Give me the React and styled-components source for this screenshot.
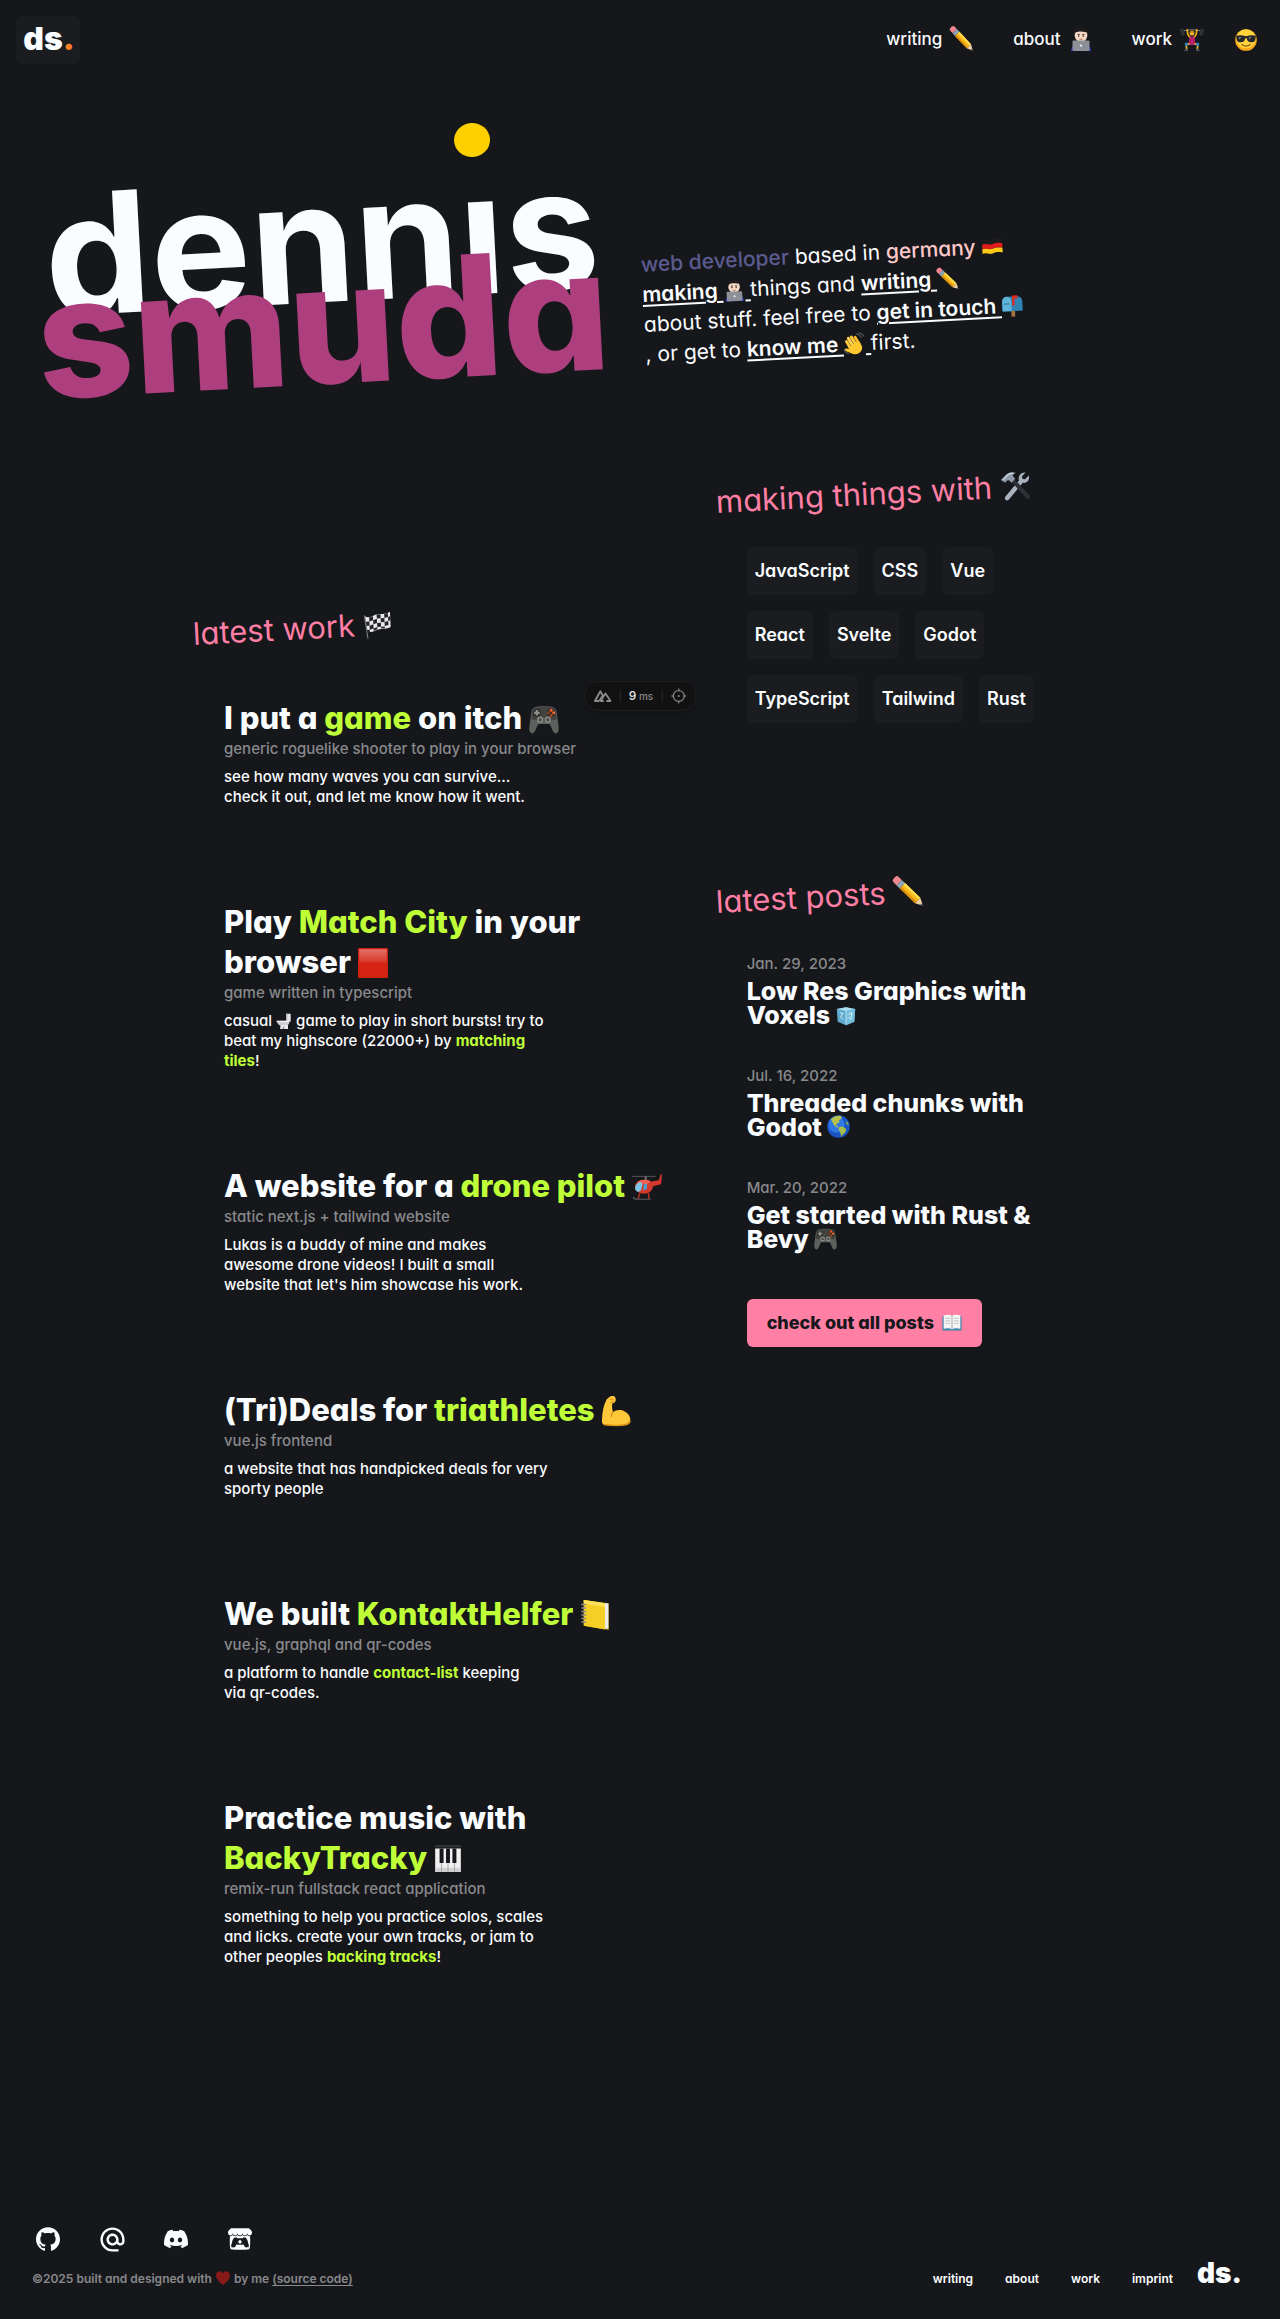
import React from 'react';
import styled, { createGlobalStyle } from 'styled-components';
import { SiGithub, SiDiscord, SiItchdotio } from 'react-icons/si';
import { MdAlternateEmail } from 'react-icons/md';

const color = {
  bg: '#16171b',
  panel: '#1b1c20',
  text: '#fafdff',
  muted: '#88898b',
  pink: '#ff7fa5',
  lime: '#bfff38',
  magenta: '#ad3f7f',
  yellow: '#ffd000',
  orange: '#ff7f24',
  indigo: '#5b5b90',
  blush: '#ffc9c9',
};

const GlobalStyle = createGlobalStyle`
  *, *::before, *::after { box-sizing: border-box; }
  body {
    margin: 0;
    background: ${color.bg};
    color: ${color.text};
    font-family: Inter, "Open Sans", sans-serif;
    font-feature-settings: "cv11" 1;
    font-size: 15px;
    line-height: 20px;
    font-weight: 500;
  }
  h1, h2, h3, p, ul { margin: 0; padding: 0; }
  ul { list-style: none; }
  a { color: inherit; text-decoration: none; }
`;

/* ---------- emoji drawings, all on a 24 x 24 board ---------- */

const drawings = {
  pencil: (
    <g transform="rotate(47 12 12)">
      <path d="M-2 9h3.500v6H-2a2 2 0 0 1-2-2v-2a2 2 0 0 1 2-2z" fill="#f0868d" />
      <path d="M1.500 9H5v6H1.500z" fill="#8aa7bd" />
      <path d="M5 9h17v6H5z" fill="#f7b718" />
      <path d="M5 9h17v2H5z" fill="#ffdc4f" />
      <path d="M5 13.400h17V15H5z" fill="#d98a0b" />
      <path d="M22 9l6 3-6 3z" fill="#f0cfa0" />
      <path d="M26 11l2.600 1-2.600 1z" fill="#3c3c3c" />
    </g>
  ),
  coder: (
    <g>
      <path d="M2 24c.5-4 2-6 4-6h12c2 0 3.500 2 4 6z" fill="#2c36c4" />
      <path d="M9 12h6v4H9z" fill="#e3bfa6" />
      <path d="M5.600 7.500C5.600 3.500 8 2 12 2s6.400 1.500 6.400 5.500S16 15 12 15 5.600 11.500 5.600 7.500z" fill="#f5d9c4" />
      <path d="M5.400 8.500C4.400 3 7.500.3 12 .3S19.600 3 18.600 8.500l-1-3.300c-3-.2-5-.8-7-.8-2 .1-3.500.6-4.200 1.300z" fill="#1e1a1c" />
      <path d="M8.500 7.400h2.400M13.100 7.400h2.400" stroke="#33231f" strokeWidth=".8" />
      <circle cx="9.700" cy="9" r=".8" fill="#33231f" />
      <circle cx="14.300" cy="9" r=".8" fill="#33231f" />
      <path d="M10.300 12q1.700.9 3.400 0" stroke="#a85a4c" fill="none" strokeWidth=".8" />
      <rect x="3.500" y="13.500" width="17" height="10.500" rx="1" fill="#8d9096" />
      <circle cx="12" cy="18.700" r="1.100" fill="#f2f2f2" />
    </g>
  ),
  lifter: (
    <g>
      <path d="M1.500 4.500Q12 1 22.500 4.500" stroke="#8c8c90" strokeWidth=".9" fill="none" />
      <rect x=".5" y="1.500" width="3.600" height="7.500" rx="1.500" fill="#303037" transform="rotate(-18 2 5)" />
      <rect x="20" y="1.500" width="3.600" height="7.500" rx="1.500" fill="#303037" transform="rotate(18 22 5)" />
      <path d="M7.200 2.800l.6 4.700 2.700 3.500M16.800 2.800l-.6 4.700-2.700 3.500" stroke="#f2b21c" strokeWidth="1.700" fill="none" strokeLinecap="round" />
      <circle cx="12" cy="6.200" r="2.300" fill="#fbc22d" />
      <path d="M9.600 6a2.400 2.600 0 0 1 4.800 0z" fill="#c98611" />
      <path d="M9.500 9.500h5l.9 8.500H8.600z" fill="#b51f6b" />
      <path d="M9.500 16.800l-3.500.4.800 4.800M14.500 16.800l3.500.4-.8 4.800" stroke="#f2b21c" strokeWidth="1.700" fill="none" />
      <path d="M4.600 16l3-.4.400 3.200-2.800.4zM19.400 16l-3-.4-.4 3.200 2.800.4z" fill="#2f7fb9" />
      <path d="M4.600 22.300h3.400V24H4.600zM16 22.300h3.400V24H16z" fill="#4a5b66" />
    </g>
  ),
  cool: (
    <g>
      <circle cx="12" cy="12" r="11.800" fill="#f9a51a" />
      <circle cx="12" cy="10.800" r="10.500" fill="#ffd33c" />
      <path d="M1 7.500c3-1 7-1 11 .4 4-1.400 8-1.400 11-.4l-.6 2c-.2 4-1.800 5-4.800 5s-4.200-1.500-4.800-4.500h-1.600c-.6 3-1.800 4.500-4.800 4.500s-4.600-1-4.800-5z" fill="#26272b" />
      <path d="M4 8.600l3 .1-2.400 3zM15 8.700l3 .1-2.400 3z" fill="#77797f" />
      <path d="M7.500 17q4.500 3.600 9 0" stroke="#8a4f10" strokeWidth="1.300" fill="none" strokeLinecap="round" />
    </g>
  ),
  german: (
    <g>
      <path d="M1 4.500c4-2 7 1.500 11 0s7-1.500 11-.5v5c-4-1-7-1-11 .5s-7-2-11 0z" fill="#1c1c1c" />
      <path d="M1 9.500c4-2 7 1.500 11 0s7-1.500 11-.5v5c-4-1-7-1-11 .5s-7-2-11 0z" fill="#e01b1b" />
      <path d="M1 14.500c4-2 7 1.500 11 0s7-1.500 11-.5v5c-4-1-7-1-11 .5s-7-2-11 0z" fill="#fdc918" />
    </g>
  ),
  mailbox: (
    <g>
      <path d="M10.500 17h4v7h-4z" fill="#a4713f" />
      <path d="M6 2h12c3 0 5 2.500 5 5.500V18H1V7.500C1 4.500 3 2 6 2z" fill="#2f84b5" />
      <path d="M6 2c3 0 5 2.500 5 5.500V18H1V7.500C1 4.500 3 2 6 2z" fill="#5fb2d8" />
      <path d="M12 1h6v3.500h-3.500V12H12z" fill="#e0281f" />
      <path d="M3 10h6" stroke="#2a6c92" strokeWidth="1" />
    </g>
  ),
  wave: (
    <g>
      <g transform="rotate(-28 12 14)">
        <rect x="5.500" y="4" width="3.200" height="13" rx="1.600" fill="#ffca3a" />
        <rect x="9" y="2" width="3.200" height="14" rx="1.600" fill="#ffd34f" />
        <rect x="12.500" y="2.500" width="3.200" height="14" rx="1.600" fill="#ffca3a" />
        <rect x="16" y="5" width="3" height="12" rx="1.500" fill="#fbbd2a" />
        <path d="M5.500 12h13.500v5c0 4-3 6.500-7 6.500S6 21 4 18l-3-4c-1-1.600 1-2.800 2.200-1.700l2.300 2z" fill="#ffc830" />
      </g>
      <path d="M14.500 1.200q4 .4 5.600 4M17.500 0q4 .8 5 4M.8 17q.6 4 4.400 5.400" stroke="#5a5c60" strokeWidth="1.100" fill="none" strokeLinecap="round" />
    </g>
  ),
  tools: (
    <g>
      <path d="M20.500 1.500l-3 3 .4 2 2 .4 3-3c1.200 3-1.500 6.700-5 5.700L6 22.500c-1.800 1.400-4-.6-2.600-2.500L15 7.500c-1-3.500 2.500-7 5.500-6z" fill="#a9b3bf" />
      <path d="M9 8.500l2.500-2.200L23 20c1 1.600-1.200 3.600-2.700 2.300z" fill="#2e3035" />
      <path d="M.5 6.500L5 2.200C7.500.2 11 .4 13 1.500c-2 .4-3 1.200-2.600 2.500L12 6 9 9 7 7c-1.300-.5-2 .2-3 1.800z" fill="#8d9aa9" />
      <path d="M2 6.500L6 3c2-1.400 4-1.600 5-1.300" stroke="#dbe3ea" strokeWidth=".8" fill="none" />
    </g>
  ),
  race: (
    <g>
      <path d="M1 3l2 20" stroke="#77797d" strokeWidth="1" />
      <path d="M1.500 4c4 2.500 7-1.500 11-1.500s7 .5 10.500-1.500v13c-4 2-6.500.8-10 1.500s-6 3-10 1.500z" fill="#e9e9e9" />
      <path d="M5 5l3.300-1v3.500L5 8.500zM11.500 2.800h3.300v3.400h-3.300zM18 2.600l3.200-.6v3.400L18 6zM2 8.500h3V12H2.400zM8.300 7.500l3.200-1v3.500l-3.200 1zM14.800 6.200H18v3.400h-3.200zM21.200 5.400l1.800-.6v3.400l-1.800.6zM5 12l3.300-1v3.500L5 15.500zM11.500 10h3.300v3.400h-3.300zM18 9.600l3.200-.8v3.400l-3.200.8zM8.300 14.500l3.200-1v2l-3.200 1.200zM14.800 13.400H18v1.500h-3.200zM2.500 15.500H5V18l-2.300-.4z" fill="#242529" />
    </g>
  ),
  gamepad: (
    <g>
      <path d="M5 2.500c2-1 12-1 14 0 2 .4 2.800 2 3.200 4.500l1.500 11c.4 3.500-.6 5.300-2.200 5.500-2.500.2-3.300-5-5-7.500h-9c-1.700 2.500-2.500 7.700-5 7.500C.9 23.300-.1 21.500.3 18L1.800 7C2.200 4.500 3 2.900 5 2.500z" fill="#5e605e" />
      <path d="M5 3.200c2-1 12-1 14 0 1.600.3 2.300 1.600 2.600 3.800l.6 5c-3 2-17 2-20.400 0l.6-5C2.700 4.800 3.400 3.500 5 3.200z" fill="#41433f" />
      <circle cx="6.300" cy="7" r="3.200" fill="#2c2d2c" />
      <path d="M5.400 4.800h1.800v1.300h1.400v1.800H7.200v1.300H5.400V7.900H4V6.100h1.400z" fill="#8b8d8a" />
      <circle cx="17.700" cy="7" r="3.400" fill="#2c2d2c" />
      <circle cx="17.700" cy="4.900" r="1.200" fill="#ff5a1f" />
      <circle cx="19.800" cy="7" r="1.200" fill="#ff6a26" />
      <circle cx="15.600" cy="7" r="1.200" fill="#8b3b22" />
      <circle cx="17.700" cy="9.100" r="1.200" fill="#b4451f" />
      <circle cx="9" cy="12.500" r="2.500" fill="#8d8f8c" />
      <circle cx="9" cy="12.500" r="1.400" fill="#4b4c4a" />
      <circle cx="15" cy="12.500" r="2.500" fill="#8d8f8c" />
      <circle cx="15" cy="12.500" r="1.400" fill="#4b4c4a" />
    </g>
  ),
  redSquare: (
    <g>
      <linearGradient id="red-sheen" x1="0" y1="0" x2="0" y2="1">
        <stop offset="0" stopColor="#e2716a" />
        <stop offset=".45" stopColor="#d83a2a" />
        <stop offset=".5" stopColor="#d62412" />
      </linearGradient>
      <rect x="0" y="0" width="24" height="24" rx=".8" fill="#c9200f" />
      <rect x="1" y="1" width="22" height="22" fill="url(#red-sheen)" />
    </g>
  ),
  toilet: (
    <g>
      <path d="M15 1h7v12h-6z" fill="#e4e4e6" />
      <path d="M15 1h2v12h-2z" fill="#b5b5ba" />
      <path d="M1 12h19v3c-1 3-3 4-5 4H8c-4 0-6-3-7-7z" fill="#cfcfd3" />
      <path d="M1 11.500h18v2H1z" fill="#f6f6f7" />
      <path d="M7 18h11v6H6z" fill="#e8e8ea" />
      <path d="M11 19l2 5h-3z" fill="#8b8b91" />
    </g>
  ),
  helicopter: (
    <g>
      <path d="M0 3.500h19" stroke="#55565a" strokeWidth=".8" />
      <path d="M11 3.500v3" stroke="#77787c" strokeWidth="1.400" />
      <path d="M14 8l7.500-1.500L23 1.500l1 .4-.8 7.300c-.2.900-1 1-2 1L15 12z" fill="#d9372b" />
      <ellipse cx="9.500" cy="11.800" rx="7.200" ry="5.600" fill="#d3392c" />
      <path d="M4 8.500c2-2.400 7-3 11-1L12 10z" fill="#ef6155" />
      <path d="M2.500 13c0-3 2-4.500 4.500-5l1.500 1.500L7 15l-2.500 1C3 15 2.500 14.200 2.500 13z" fill="#7cc5e8" />
      <path d="M9.500 9.500H12v4L9 14.500z" fill="#4b9fd0" />
      <path d="M6 17l-1 4.500M13 16.500l.6 5" stroke="#c23126" strokeWidth="1.100" />
      <path d="M1 20q.6 1.800 3 1.800h11" stroke="#5c5d61" strokeWidth=".9" fill="none" />
    </g>
  ),
  biceps: (
    <g>
      <path d="M6.500 1C8-.2 10.600-.3 11.300 1c.9 1.600.6 3.600-.8 4.500L9 5.800c-.4 2.700 0 5 .7 7.200 1.900-1.800 6-2.600 9.300-.6 3.500 2 5 5 4.200 8.300-.4 1.500-1.700 2.500-4 2.700-5.500.6-12 .6-16.200-.2C1 22.800.6 21 .8 18.500 1 13 2 7 4.600 2.500z" fill="#ffc83a" />
      <path d="M9.700 13c-1 1-1.500 2.300-1.400 3.500M3 23c6 .8 13 .8 17-.2 2-.6 3-1.600 3.200-2.600" stroke="#dd9113" strokeWidth="1.100" fill="none" strokeLinecap="round" />
      <path d="M7 3l3-.6M7.500 5.200l3-.8" stroke="#dd9113" strokeWidth=".8" />
    </g>
  ),
  ledger: (
    <g>
      <path d="M3 0l20 2.500V24L3 20.500z" fill="#b98e0e" />
      <path d="M19.500 2.500l3.200.3V23l-3.200-.3z" fill="#ececec" />
      <path d="M3 0l17 2.500V23.500L3 20.500z" fill="#f5cf26" />
      <path d="M3 0l17 2.500v3L3 3z" fill="#ffe25a" />
      <path d="M1.500 3.500h3M1.500 6.300h3M1.500 9.100h3M1.500 11.900h3M1.500 14.700h3M1.500 17.500h3" stroke="#8e8f92" strokeWidth="1.200" strokeLinecap="round" />
    </g>
  ),
  piano: (
    <g>
      <rect x="1" y="0" width="22" height="2" fill="#303135" />
      <rect x="1" y="3" width="22" height="20" fill="#f0f0f0" />
      <path d="M1 19.500h22V23H1z" fill="#d0d0d2" />
      <path d="M6.500 4v19M12 4v19M17.500 4v19" stroke="#a3a3a7" strokeWidth=".8" />
      <path d="M4.800 3h3.400v12.500H4.800zM10.300 3h3.400v12.500h-3.400zM15.800 3h3.400v12.500h-3.400z" fill="#17181b" />
    </g>
  ),
  ice: (
    <g>
      <path d="M1 3.500l11-2L23 3.500 22 19l-10 4L2 19z" fill="#5fa9cd" />
      <path d="M1 3.500l11-2 11 2L12 6z" fill="#a8dcee" />
      <path d="M12 6l11-2.500L22 19l-10 4z" fill="#74bedd" />
      <path d="M4.500 8l4 1-3 4 3 3M15 10l4-2-1 8-3-3" stroke="#d6f1fa" strokeWidth="1.200" fill="none" />
      <path d="M12 6v16" stroke="#c8ebf7" strokeWidth="1" />
    </g>
  ),
  globe: (
    <g>
      <circle cx="12" cy="12" r="11.800" fill="#1b55c4" />
      <circle cx="10" cy="10" r="8.500" fill="#2f78e3" />
      <path d="M4 4.500C7 1.500 11 .4 14.500 1l1 2.500-3 2 .5 2.500-2.500.5-1 2.500 2.500 1.500-1 .8L7.500 11 5.500 7z" fill="#b7c24b" />
      <path d="M12.500 12.500l4-.5 3.500 2.500-.8 3.500-3 2.500-1.200 2.500-1.200-5L12 15z" fill="#a9bd48" />
      <path d="M20 6l2.500 3-.4 2-2-2z" fill="#8fae4a" />
    </g>
  ),
  book: (
    <g>
      <path d="M.5 4h23v17H.5z" fill="#3f87ad" />
      <path d="M2 3c4-1.400 8-1 10 .6C14 2 18 1.600 22 3v16c-4-1-8-.8-10 .8C10 18.200 6 18 2 19z" fill="#f5f5f5" />
      <path d="M12 3.600v16.200" stroke="#9a9a9e" strokeWidth="1" />
      <path d="M4 6.500q3-.8 6 .4M4 9.500q3-.8 6 .4M4 12.500q3-.8 6 .4M14 6.900q3-1.200 6-.4M14 9.900q3-1.200 6-.4M14 12.900q3-1.200 6-.4" stroke="#b4b4b8" strokeWidth=".9" fill="none" />
    </g>
  ),
  heart: (
    <path d="M12 22.500C5 17 1.500 13 1.500 8.300 1.500 4.700 4 2 7 2c2.200 0 4 1.200 5 3.200C13 3.200 14.800 2 17 2c3 0 5.500 2.700 5.500 6.300C22.500 13 19 17 12 22.500z" fill="#8a1a1a" />
  ),
};

const EmojiSvg = styled.svg`
  width: ${(p) => p.$size}px;
  height: ${(p) => p.$size}px;
  vertical-align: ${(p) => p.$drop}px;
  overflow: visible;
  flex: none;
`;

const Emoji = ({ name, size = 20, drop = -4 }) => (
  <EmojiSvg $size={size} $drop={drop} viewBox="0 0 24 24" aria-hidden="true">
    {drawings[name]}
  </EmojiSvg>
);

/* ---------- header ---------- */

const Page = styled.div`
  position: relative;
`;

const Header = styled.header`
  display: flex;
  align-items: center;
  justify-content: space-between;
  padding: 16px 23px 16px 16px;
`;

const LogoLink = styled.a`
  display: flex;
  align-items: center;
  justify-content: center;
  width: 64px;
  height: 48px;
  padding: 0 0 2px 2px;
  border-radius: 6px;
  background: ${color.panel};
  font-size: 32px;
  line-height: 32px;
  font-weight: 900;
`;

const Dot = styled.span`
  color: ${color.orange};
`;

const Nav = styled.nav`
  display: flex;
  align-items: center;
  gap: 39px;
`;

const NavLink = styled.a`
  display: flex;
  align-items: center;
  gap: 8px;
  padding-bottom: 2px;
  font-size: 17px;
  line-height: 22px;
`;

const ThemeButton = styled.button`
  display: flex;
  padding: 0;
  border: 0;
  margin-left: -8px;
  background: none;
  cursor: pointer;
`;

/* ---------- hero ---------- */

const Hero = styled.section`
  display: grid;
  grid-template-columns: 1fr 1fr;
  align-items: start;
  padding-top: 135px;
`;

const Name = styled.h1`
  position: relative;
  margin-left: 40px;
  display: flex;
  flex-direction: column;
  font-size: 168px;
  line-height: 82px;
  font-weight: 800;
  transform: rotate(-3deg);
  transform-origin: 0 184px;
`;

const FirstName = styled.span`
  padding-left: 12px;
  font-weight: 700;
`;

const LastName = styled.span`
  position: relative;
  color: ${color.magenta};
`;

const Sun = styled.span`
  position: absolute;
  left: 427px;
  top: -69px;
  width: 36px;
  height: 34px;
  border-radius: 50%;
  background: ${color.yellow};
`;

const Intro = styled.p`
  margin-top: 35px;
  font-size: 21px;
  line-height: 30px;
  font-weight: 400;
  white-space: nowrap;
  transform: rotate(-3deg);
  transform-origin: 0 0;
`;

const Tint = styled.span`
  color: ${(p) => p.$color};
  font-weight: 500;
`;

const IntroLink = styled.a`
  font-weight: 600;
  text-decoration: underline;
  text-underline-offset: 3px;
  text-decoration-thickness: 2px;
`;

/* ---------- columns ---------- */

const Main = styled.main`
  display: grid;
  grid-template-columns: 7fr 5fr;
  max-width: 896px;
  margin: 0 auto;
  padding: 103px 0 260px;
`;

const WorkColumn = styled.section`
  padding-top: 132px;
`;

const Heading = styled.h2`
  padding-left: 2px;
  color: ${color.pink};
  font-size: 31px;
  line-height: 40px;
  font-weight: 400;
  white-space: nowrap;
  transform: rotate(-3deg);
  transform-origin: 0 100%;
`;

const WorkList = styled.ul`
  display: flex;
  flex-direction: column;
  gap: 95px;
  padding: 44px 0 0 32px;
`;

const WorkTitle = styled.h3`
  padding-bottom: 1px;
  font-size: 31px;
  line-height: 40px;
  font-weight: 800;
  white-space: nowrap;
`;

const Muted = styled.p`
  color: ${color.muted};
`;

const WorkText = styled.p`
  padding-top: 8px;
  white-space: nowrap;
`;

const Lime = styled.span`
  color: ${color.lime};
  font-weight: ${(p) => (p.$small ? 700 : 800)};
`;

const Tags = styled.ul`
  display: flex;
  flex-wrap: wrap;
  gap: 16px;
  max-width: 336px;
  padding: 25px 0 0 32px;
`;

const Tag = styled.li`
  padding: 12px 8px;
  border-radius: 6px;
  background: ${color.panel};
  font-size: 18px;
  line-height: 24px;
  font-weight: 600;
`;

const Posts = styled.section`
  padding-top: 159px;
`;

const PostList = styled.ul`
  display: flex;
  flex-direction: column;
  gap: 39px;
  padding: 32px 0 48px 32px;
`;

const PostTitle = styled.h3`
  padding-top: 5px;
  font-size: 25px;
  line-height: 24px;
  font-weight: 800;
  white-space: nowrap;
`;

const PostsButton = styled.a`
  display: inline-flex;
  align-items: center;
  gap: 8px;
  height: 48px;
  margin-left: 32px;
  padding: 0 20px;
  border-radius: 6px;
  background: ${color.pink};
  color: ${color.bg};
  font-size: 18px;
  font-weight: 800;
`;

/* ---------- devtools pill ---------- */

const Pill = styled.aside`
  position: absolute;
  top: 681px;
  left: 50%;
  transform: translateX(-50%);
  display: flex;
  align-items: center;
  gap: 8px;
  height: 30px;
  padding: 0 9px;
  border: 1px solid #1f1f20;
  border-radius: 15px;
  background: #111111;
  box-shadow: 0 2px 10px rgba(0, 0, 0, 0.2);
  color: #8a8a8a;
`;

const PillButton = styled.button`
  display: flex;
  padding: 0;
  border: 0;
  background: none;
  color: inherit;
`;

const Divider = styled.span`
  width: 1px;
  height: 10px;
  background: #2c2c2c;
`;

const Timing = styled.span`
  font-size: 10px;
  b {
    color: #e6e6e6;
    font-size: 12px;
    font-weight: 500;
  }
`;

/* ---------- footer ---------- */

const Footer = styled.footer`
  display: flex;
  flex-wrap: wrap;
  align-items: flex-end;
  justify-content: space-between;
  padding: 0 38px 30px 32px;
  font-size: 12px;
  font-weight: 600;
`;

const Socials = styled.div`
  display: flex;
  gap: 32px;
  padding-bottom: 18px;
`;

const Social = styled.a`
  display: flex;
  align-items: center;
  justify-content: center;
  width: 32px;
  height: 24px;
`;

const Credit = styled.p`
  color: ${color.muted};
`;

const SourceLink = styled.a`
  text-decoration: underline;
  text-underline-offset: 2px;
`;

const FooterNav = styled.nav`
  display: flex;
  align-items: baseline;
  gap: 32px;
`;

const FooterLogo = styled.a`
  margin-left: -8px;
  font-size: 28px;
  line-height: 20px;
  font-weight: 900;
`;

const tags = ['JavaScript', 'CSS', 'Vue', 'React', 'Svelte', 'Godot', 'TypeScript', 'Tailwind', 'Rust'];

const works = [
  {
    title: <>I put a <Lime>game</Lime> on itch <Emoji name="gamepad" size={30} drop={-5} /></>,
    stack: 'generic roguelike shooter to play in your browser',
    text: <>see how many waves you can survive...<br />check it out, and let me know how it went.</>,
  },
  {
    title: <>Play <Lime>Match City</Lime> in your<br />browser <Emoji name="redSquare" size={30} drop={-5} /></>,
    stack: 'game written in typescript',
    text: (
      <>
        casual <Emoji name="toilet" size={16} drop={-3} /> game to play in short bursts! try to<br />
        beat my highscore (22000+) by <Lime $small>matching<br />tiles</Lime>!
      </>
    ),
  },
  {
    title: <>A website for a <Lime>drone pilot</Lime> <Emoji name="helicopter" size={30} drop={-5} /></>,
    stack: 'static next.js + tailwind website',
    text: <>Lukas is a buddy of mine and makes<br />awesome drone videos! I built a small<br />website that let's him showcase his work.</>,
  },
  {
    title: <>(Tri)Deals for <Lime>triathletes</Lime> <Emoji name="biceps" size={30} drop={-5} /></>,
    stack: 'vue.js frontend',
    text: <>a website that has handpicked deals for very<br />sporty people</>,
  },
  {
    title: <>We built <Lime>KontaktHelfer</Lime> <Emoji name="ledger" size={30} drop={-5} /></>,
    stack: 'vue.js, graphql and qr-codes',
    text: <>a platform to handle <Lime $small>contact-list</Lime> keeping<br />via qr-codes.</>,
  },
  {
    title: <>Practice music with<br /><Lime>BackyTracky</Lime> <Emoji name="piano" size={28} drop={-4} /></>,
    stack: 'remix-run fullstack react application',
    text: (
      <>
        something to help you practice solos, scales<br />and licks. create your own tracks, or jam to<br />
        other peoples <Lime $small>backing tracks</Lime>!
      </>
    ),
  },
];

const posts = [
  { date: 'Jan. 29, 2023', title: <>Low Res Graphics with<br />Voxels <Emoji name="ice" size={20} drop={-2} /></> },
  { date: 'Jul. 16, 2022', title: <>Threaded chunks with<br />Godot <Emoji name="globe" size={23} drop={-2} /></> },
  { date: 'Mar. 20, 2022', title: <>Get started with Rust &amp;<br />Bevy <Emoji name="gamepad" size={23} drop={-2} /></> },
];

export default function App() {
  return (
    <Page>
      <GlobalStyle />
      <Header>
        <LogoLink href="#home"><span>ds<Dot>.</Dot></span></LogoLink>
        <Nav>
          <NavLink href="#writing">writing <Emoji name="pencil" size={24} /></NavLink>
          <NavLink href="#about">about <Emoji name="coder" size={24} /></NavLink>
          <NavLink href="#work">work <Emoji name="lifter" size={24} /></NavLink>
          <ThemeButton type="button" aria-label="theme"><Emoji name="cool" size={22} /></ThemeButton>
        </Nav>
      </Header>

      <Hero>
        <Name>
          <FirstName>dennıs</FirstName>
          <LastName>smuda</LastName>
          <Sun />
        </Name>
        <Intro>
          <Tint $color={color.indigo}>web developer</Tint> based in <Tint $color={color.blush}>germany</Tint> <Emoji name="german" size={22} /><br />
          <IntroLink href="#work">making <Emoji name="coder" size={22} /> </IntroLink>things and <IntroLink href="#writing">writing <Emoji name="pencil" size={22} /></IntroLink><br />
          about stuff. feel free to <IntroLink href="#contact">get in touch <Emoji name="mailbox" size={22} /></IntroLink><br />
          , or get to <IntroLink href="#about">know me <Emoji name="wave" size={22} /> </IntroLink>first.
        </Intro>
      </Hero>

      <Main>
        <WorkColumn>
          <Heading>latest work <Emoji name="race" size={28} /></Heading>
          <WorkList>
            {works.map((w) => (
              <li key={w.stack}>
                <WorkTitle>{w.title}</WorkTitle>
                <Muted>{w.stack}</Muted>
                <WorkText>{w.text}</WorkText>
              </li>
            ))}
          </WorkList>
        </WorkColumn>
        <div>
          <Heading>making things with <Emoji name="tools" size={30} /></Heading>
          <Tags>
            {tags.map((t) => <Tag key={t}>{t}</Tag>)}
          </Tags>
          <Posts>
            <Heading>latest posts <Emoji name="pencil" size={30} /></Heading>
            <PostList>
              {posts.map((p) => (
                <li key={p.date}>
                  <Muted>{p.date}</Muted>
                  <PostTitle>{p.title}</PostTitle>
                </li>
              ))}
            </PostList>
            <PostsButton href="#posts">check out all posts <Emoji name="book" size={20} /></PostsButton>
          </Posts>
        </div>
      </Main>

      <Footer>
        <div>
          <Socials>
            <Social href="#github" aria-label="GitHub"><SiGithub size={24} /></Social>
            <Social href="#mail" aria-label="Mail"><MdAlternateEmail size={29} /></Social>
            <Social href="#discord" aria-label="Discord"><SiDiscord size={24} /></Social>
            <Social href="#itch" aria-label="itch.io"><SiItchdotio size={24} /></Social>
          </Socials>
          <Credit>
            ©2025 built and designed with <Emoji name="heart" size={16} drop={-3} /> by me <SourceLink href="#source">(source code)</SourceLink>
          </Credit>
        </div>
        <FooterNav>
          <a href="#writing">writing</a>
          <a href="#about">about</a>
          <a href="#work">work</a>
          <a href="#imprint">imprint</a>
          <FooterLogo href="#home">ds.</FooterLogo>
        </FooterNav>
      </Footer>

      <Pill>
        <PillButton type="button" aria-label="devtools">
          <svg width="18" height="12" viewBox="0 0 18 12" fill="none" stroke="currentColor" strokeWidth="1.800" strokeLinejoin="round">
            <path d="M5.500 11H1.200L6.600 1.200 9 5.400 5.500 11M10 11H7l4.700-7.600L16.800 11h-4.200" />
          </svg>
        </PillButton>
        <Divider />
        <Timing><b>9</b> ms</Timing>
        <Divider />
        <PillButton type="button" aria-label="inspect">
          <svg width="16" height="16" viewBox="0 0 16 16" fill="none" stroke="currentColor" strokeWidth="1.200">
            <circle cx="8" cy="8" r="5.500" />
            <path d="M8 .5v3M8 12.500v3M.5 8h3M12.500 8h3" />
            <circle cx="8" cy="8" r="1" fill="currentColor" stroke="none" />
          </svg>
        </PillButton>
      </Pill>
    </Page>
  );
}
